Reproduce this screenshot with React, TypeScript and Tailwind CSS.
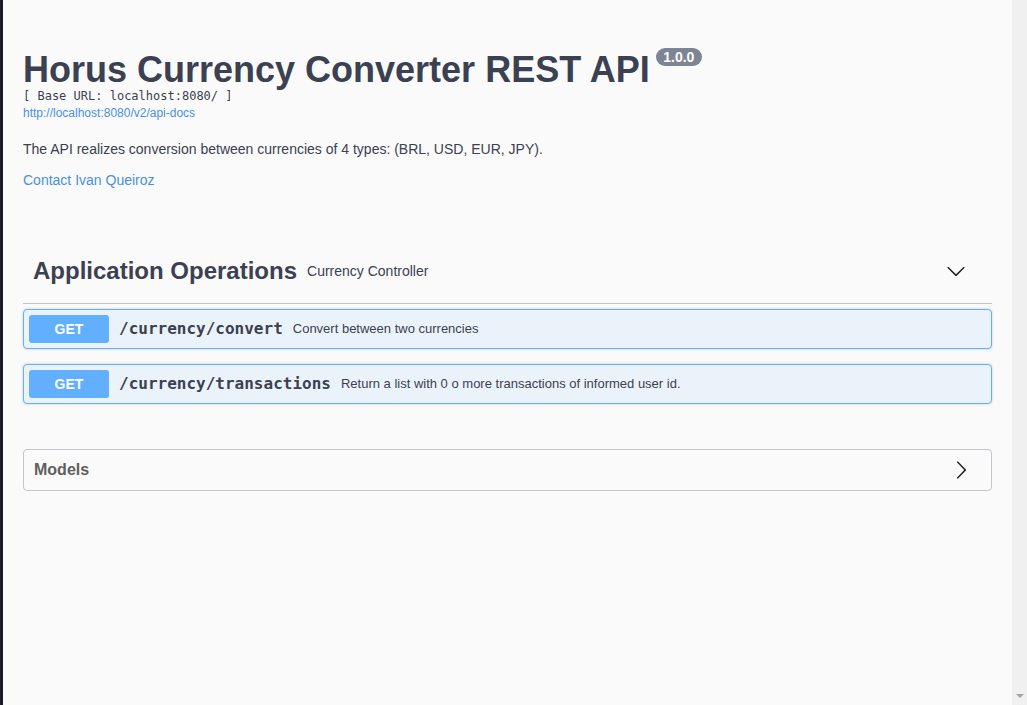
import React from 'react';

const operations = [
    { method: 'GET', path: '/currency/convert', summary: 'Convert between two currencies' },
    { method: 'GET', path: '/currency/transactions', summary: 'Return a list with 0 o more transactions of informed user id.' },
];

const Arrow: React.FC<{ className?: string }> = ({ className }) => (
    <svg viewBox="0 0 20 20" width="20" height="20" className={className} fill="currentColor">
        <path d="M17.418 6.109c.272-.268.709-.268.979 0s.271.701 0 .969l-7.908 7.83c-.27.268-.707.268-.979 0l-7.908-7.83c-.27-.268-.27-.701 0-.969.271-.268.709-.268.979 0L10 13.25l7.418-7.141z" />
    </svg>
);

const OperationRow: React.FC<{ op: typeof operations[0] }> = ({ op }) => (
    <div className="mb-[15px] rounded-[4px] border border-[#61affe] bg-[#ebf3fa] shadow-[0_0_3px_rgba(0,0,0,0.19)]">
        <div className="flex items-center p-[5px]">
            <span className="flex h-[28px] w-[80px] items-center justify-center rounded-[3px] bg-[#61affe] text-[14px] font-bold text-white">
                {op.method}
            </span>
            <span className="px-[10px] font-['DejaVu_Sans_Mono',monospace] text-[16px] font-bold text-[#3b4151]">{op.path}</span>
            <span className="text-[13px] text-[#3b4151]">{op.summary}</span>
        </div>
    </div>
);

export default function App() {
    return (
        <div className="flex h-[705px] w-full overflow-hidden bg-[#fafafa] font-['Liberation_Sans',Arial,sans-serif] text-[#3b4151]">
            <div className="w-[3px] shrink-0 bg-[#1c1c26]" />

            <main className="min-w-0 flex-1 px-[20px]">
                <section className="pt-[49px]">
                    <h2 className="flex items-start text-[36px] leading-[41px] font-bold">
                        <span>Horus Currency Converter REST API</span>
                        <span className="-mt-px ml-[6px] flex h-[18px] w-[46px] items-center justify-center rounded-full bg-[#7d8492] text-[14px] leading-none font-bold text-white">
                            1.0.0
                        </span>
                    </h2>
                    <p className="-mt-px font-['DejaVu_Sans_Mono',monospace] text-[12px] leading-[14px]">[ Base URL: localhost:8080/ ]</p>
                    <a className="mt-[3px] block text-[12px] leading-[14px] text-[#4990e2]">http://localhost:8080/v2/api-docs</a>
                    <p className="mt-[21px] text-[14px] leading-[16px]">
                        The API realizes conversion between currencies of 4 types: (BRL, USD, EUR, JPY).
                    </p>
                    <a className="mt-[15px] block text-[14px] leading-[16px] text-[#4990e2]">Contact Ivan Queiroz</a>
                </section>

                <section className="mt-[51px]">
                    <div className="flex h-[65px] items-center border-b border-[#c1c3c7] pl-[10px] pr-[20px]">
                        <h4 className="text-[24px] leading-[28px] font-bold">Application Operations</h4>
                        <span className="flex-1 pl-[10px] text-[14px]">Currency Controller</span>
                        <Arrow className="mr-[6px] text-[#1f1f1f]" />
                    </div>
                    <div className="mt-[5px]">
                        {operations.map(op => (
                            <OperationRow key={op.path} op={op} />
                        ))}
                    </div>
                </section>

                <section className="mt-[45px] flex h-[42px] items-center rounded-[4px] border border-[#c4c6cb] pl-[10px] pr-[20px]">
                    <h4 className="flex-1 text-[16px] font-bold text-[#606060]">Models</h4>
                    <Arrow className="-rotate-90 text-[#1f1f1f]" />
                </section>
            </main>

            <div className="flex w-[15px] shrink-0 flex-col justify-end bg-[#f0f0f0] pb-[7px]">
                <div className="mx-auto h-0 w-0 border-x-[4px] border-t-[4px] border-x-transparent border-t-[#a3a3a3]" />
            </div>
        </div>
    );
}
